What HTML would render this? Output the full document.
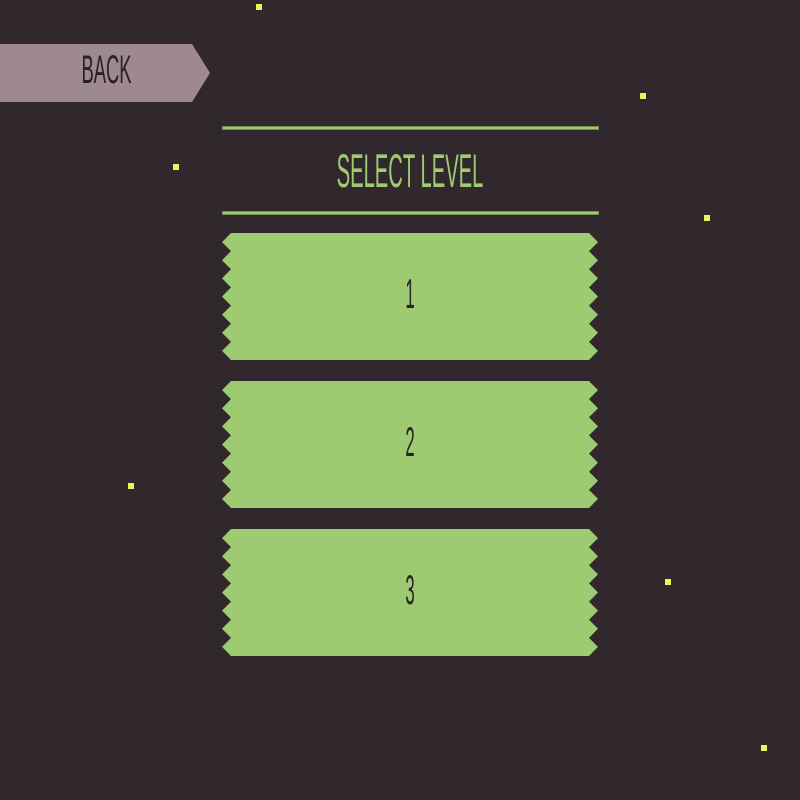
<!DOCTYPE html>
<html><head><meta charset="utf-8"><style>
html,body{margin:0;padding:0;background:#30282d;width:800px;height:800px;overflow:hidden;position:relative;font-family:"Liberation Sans",sans-serif}
.star{position:absolute;width:6px;height:6px;background:#f0f060}
.t{position:absolute;text-align:center;transform-origin:center;white-space:nowrap}
.line{position:absolute;left:222px;width:375px;height:2px;background:#9ecb72;border:1px solid #6f9250}
</style></head><body>
<div class="star" style="left:256px;top:4px"></div>
<div class="star" style="left:640px;top:93px"></div>
<div class="star" style="left:173px;top:164px"></div>
<div class="star" style="left:704px;top:215px"></div>
<div class="star" style="left:128px;top:483px"></div>
<div class="star" style="left:665px;top:579px"></div>
<div class="star" style="left:761px;top:745px"></div>
<svg width="800" height="800" style="position:absolute;left:0;top:0">
<polygon points="0,44 192,44 210,73 192,102 0,102" fill="#9e8891"/>
<g id="rib"></g>
</svg>
<div class="line" style="top:126px"></div>
<div class="line" style="top:211px"></div>
<div class="t" style="left:0;width:213px;top:48px;font-size:40px;color:#2b2226;transform:scaleX(0.46)">BACK</div>
<div class="t" style="left:210px;width:400px;top:143px;font-size:47px;color:#9ecb72;transform:scaleX(0.43)">SELECT LEVEL</div>
<div class="t" style="left:310px;width:200px;top:270px;font-size:42px;color:#2b2226;transform:scaleX(0.4)">1</div>
<div class="t" style="left:310px;width:200px;top:418px;font-size:42px;color:#2b2226;transform:scaleX(0.4)">2</div>
<div class="t" style="left:310px;width:200px;top:566px;font-size:42px;color:#2b2226;transform:scaleX(0.4)">3</div>
<script>
var g=document.getElementById('rib'),s='';
[233,381,529].forEach(function(y0){
 var p=[],n=7,h=127/n,i;
 for(i=0;i<n;i++){p.push('231,'+(y0+i*h));p.push('222,'+(y0+i*h+h/2));}
 p.push('231,'+(y0+127));
 for(i=n;i>0;i--){p.push('589,'+(y0+i*h));p.push('598,'+(y0+i*h-h/2));}
 p.push('589,'+y0);
 s+='<polygon points="'+p.join(' ')+'" fill="#9ecb72"/>';
});
g.innerHTML=s;
</script>
</body></html>
